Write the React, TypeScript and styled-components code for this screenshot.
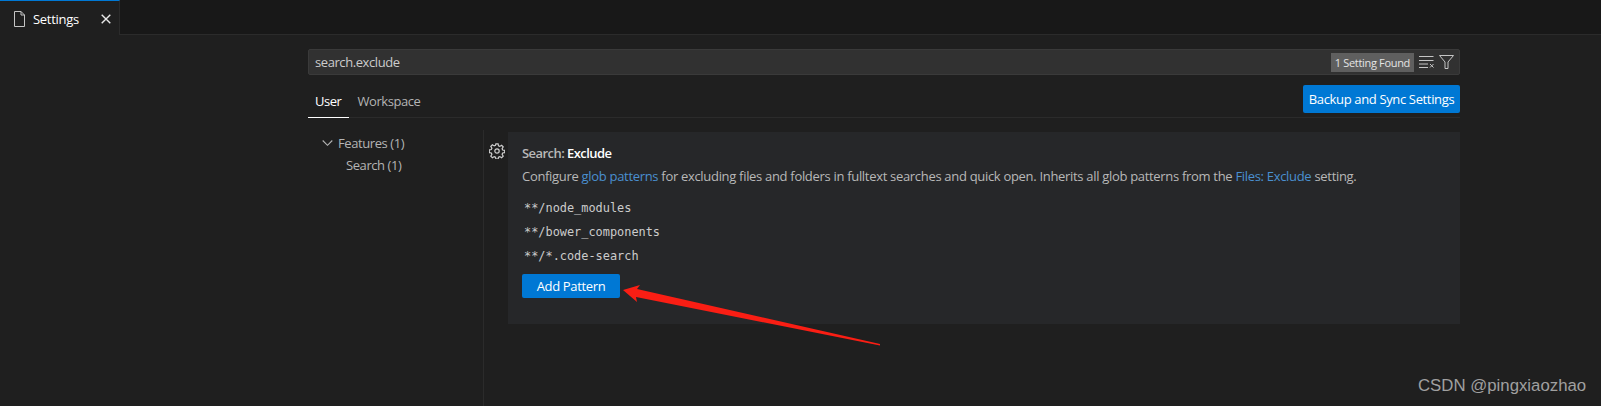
import React from "react"
import styled, { createGlobalStyle } from "styled-components"

const GlobalStyle = createGlobalStyle`
    html, body {
        margin: 0;
        padding: 0;
        background: #1f1f1f;
    }
`

const Page = styled.div`
    position: relative;
    width: 1601px;
    height: 406px;
    overflow: hidden;
    display: flex;
    flex-direction: column;
    background: #1f1f1f;
    color: #cccccc;
    font-family: "Open Sans", "Noto Sans", sans-serif;
    font-size: 13px;
`

const TabStrip = styled.div`
    display: flex;
    height: 35px;
    background: #181818;
    border-bottom: 1px solid #2b2b2b;
    box-sizing: border-box;
`

const Tab = styled.div`
    display: flex;
    align-items: center;
    width: 120px;
    height: 35px;
    box-sizing: border-box;
    padding: 1px 0 0 13px;
    background: #1f1f1f;
    border-top: 1px solid #0078d4;
    border-right: 1px solid #2b2b2b;
    color: #ffffff;
`

const TabLabel = styled.span`
    margin-left: 7px;
    width: 68px;
    letter-spacing: -0.3px;
`

const Main = styled.div`
    flex: 1;
    display: flex;
    flex-direction: column;
    width: 1152px;
    margin-left: 308px;
    padding-top: 14px;
    min-height: 0;
`

const SearchBox = styled.div`
    display: flex;
    align-items: center;
    height: 26px;
    box-sizing: border-box;
    padding: 0 5px 0 6px;
    background: #313131;
    border: 1px solid #3a3a3a;
    border-radius: 2px;
`

const SearchText = styled.span`
    flex: 1;
    letter-spacing: -0.42px;
`

const Badge = styled.span`
    display: flex;
    align-items: center;
    height: 19px;
    padding: 0 4px;
    background: #5f5f5f;
    color: #e4e4e4;
    font-size: 11px;
    letter-spacing: -0.32px;
`

const SearchIcon = styled.svg<{ $gap: number }>`
    display: block;
    margin-left: ${p => p.$gap}px;
`

const TabsRow = styled.div`
    display: flex;
    justify-content: space-between;
    margin-top: 10px;
    height: 33px;
    box-sizing: border-box;
    border-bottom: 1px solid #2b2b2b;
`

const SettingsTabs = styled.div`
    display: flex;
    gap: 2px;
`

const SettingsTab = styled.div<{ $active?: boolean }>`
    height: 33px;
    box-sizing: border-box;
    padding: 7px 7px 0;
    color: ${p => (p.$active ? "#ffffff" : "#b4b4b4")};
    border-bottom: 1px solid ${p => (p.$active ? "#ffffff" : "transparent")};
    letter-spacing: -0.45px;
`

const PrimaryButton = styled.div`
    display: flex;
    align-items: center;
    justify-content: center;
    box-sizing: border-box;
    background: #0078d4;
    color: #ffffff;
    border-radius: 2px;
    letter-spacing: -0.35px;
`

const SyncButton = styled(PrimaryButton)`
    width: 157px;
    height: 28px;
`

const Body = styled.div`
    flex: 1;
    display: flex;
    margin-top: 12px;
    min-height: 0;
`

const Tree = styled.div`
    width: 176px;
    box-sizing: border-box;
    padding-top: 2px;
    border-right: 1px solid #2b2b2b;
`

const TreeRow = styled.div<{ $indent: number }>`
    display: flex;
    align-items: center;
    height: 22px;
    padding-left: ${p => p.$indent}px;
    color: #b4b4b4;
    letter-spacing: -0.42px;
`

const Chevron = styled.svg`
    margin-right: 5px;
`

const GearColumn = styled.div`
    width: 24px;
    padding: 13px 0 0 5px;
    box-sizing: border-box;
`

const Card = styled.div`
    flex: 1;
    align-self: flex-start;
    height: 192px;
    margin-top: 2px;
    box-sizing: border-box;
    padding: 12px 14px 0;
    background: #262729;
`

const SettingTitle = styled.div`
    line-height: 18px;
    color: #b8b8b8;
    font-weight: 600;
    letter-spacing: -0.55px;
    b {
        color: #ffffff;
        font-weight: 600;
    }
`

const Description = styled.div`
    margin-top: 5px;
    line-height: 18px;
    color: #b8b8b8;
    letter-spacing: -0.31px;
`

const Link = styled.span`
    color: #4a90d0;
`

const PatternList = styled.div`
    margin-top: 11px;
`

const Pattern = styled.div`
    height: 24px;
    line-height: 24px;
    padding-left: 2px;
    font-family: "DejaVu Sans Mono", "Liberation Mono", monospace;
    font-size: 11.9px;
    color: #cccccc;
`

const AddButton = styled(PrimaryButton)`
    width: 98px;
    height: 24px;
    margin-top: 6px;
`

const Arrow = styled.svg`
    position: absolute;
    left: 0;
    top: 0;
    pointer-events: none;
`

const Watermark = styled.div`
    position: absolute;
    left: 1418px;
    top: 376px;
    font-family: "Liberation Sans", Arial, sans-serif;
    font-size: 16.8px;
    line-height: 20px;
    color: #a0a0a0;
`

const App = () => {
    return (
        <Page>
            <GlobalStyle />
            <TabStrip>
                <Tab>
                    <svg width="13" height="16" viewBox="0 0 13 16" fill="none" stroke="#c5c5c5" strokeWidth="1">
                        <path d="M1.5 .5h6.5l3.5 3.500v11.500h-10z" />
                        <path d="M8 .5v3.500h3.500" />
                    </svg>
                    <TabLabel>Settings</TabLabel>
                    <svg width="10" height="10" viewBox="0 0 10 10" stroke="#e8e8e8" strokeWidth="1.4">
                        <path d="M.7 .7l8.600 8.600M9.300 .7l-8.600 8.600" />
                    </svg>
                </Tab>
            </TabStrip>
            <Main>
                <SearchBox>
                    <SearchText>search.exclude</SearchText>
                    <Badge>1 Setting Found</Badge>
                    <SearchIcon $gap={5} width="15" height="12" viewBox="0 0 15 12" fill="none" stroke="#c5c5c5" strokeWidth="1">
                        <path d="M0 .5h14.500M0 4.500h14.500M0 8h9M0 11.500h9M11 8l3.500 3.500M14.500 8l-3.500 3.500" />
                    </SearchIcon>
                    <SearchIcon $gap={5} width="15" height="14" viewBox="0 0 15 14" fill="none" stroke="#c5c5c5" strokeWidth="1">
                        <path d="M.5 .5h14l-5.500 6.500v6.500h-3v-6.500z" />
                    </SearchIcon>
                </SearchBox>
                <TabsRow>
                    <SettingsTabs>
                        <SettingsTab $active>User</SettingsTab>
                        <SettingsTab>Workspace</SettingsTab>
                    </SettingsTabs>
                    <SyncButton>Backup and Sync Settings</SyncButton>
                </TabsRow>
                <Body>
                    <Tree>
                        <TreeRow $indent={14}>
                            <Chevron width="11" height="8" viewBox="0 0 11 8" fill="none" stroke="#b4b4b4" strokeWidth="1.1">
                                <path d="M.7 1.500l4.800 4.800 4.800-4.800" />
                            </Chevron>
                            Features (1)
                        </TreeRow>
                        <TreeRow $indent={38}>Search (1)</TreeRow>
                    </Tree>
                    <GearColumn>
                        <svg width="16" height="16" viewBox="0 0 16 16" fill="none" stroke="#d0d0d0" strokeWidth="1.2">
                            <circle cx="8" cy="8" r="2.200" />
                            <path d="M6.900 .8h2.200l.4 2 1.300 .6 1.800-1.100 1.600 1.600-1.100 1.800 .6 1.300 2 .4v2.200l-2 .4-.6 1.300 1.100 1.800-1.600 1.600-1.800-1.100-1.300 .6-.4 2H6.900l-.4-2-1.300-.6-1.800 1.100-1.600-1.600 1.100-1.800-.6-1.300-2-.4V6.900l2-.4 .6-1.300-1.100-1.800 1.600-1.600 1.800 1.100 1.300-.6z" />
                        </svg>
                    </GearColumn>
                    <Card>
                        <SettingTitle>Search: <b>Exclude</b></SettingTitle>
                        <Description>
                            Configure <Link>glob patterns</Link> for excluding files and folders in fulltext searches and quick open. Inherits all glob patterns from the <Link>Files: Exclude</Link> setting.
                        </Description>
                        <PatternList>
                            <Pattern>**/node_modules</Pattern>
                            <Pattern>**/bower_components</Pattern>
                            <Pattern>**/*.code-search</Pattern>
                        </PatternList>
                        <AddButton>Add Pattern</AddButton>
                    </Card>
                </Body>
            </Main>
            <Arrow width="1601" height="406" viewBox="0 0 1601 406">
                <polygon points="623,290 640,285 637,289 880,344 880,345.500 636,297 637,302" fill="#fa1e14" />
            </Arrow>
            <Watermark>CSDN @pingxiaozhao</Watermark>
        </Page>
    )
}

export default App
